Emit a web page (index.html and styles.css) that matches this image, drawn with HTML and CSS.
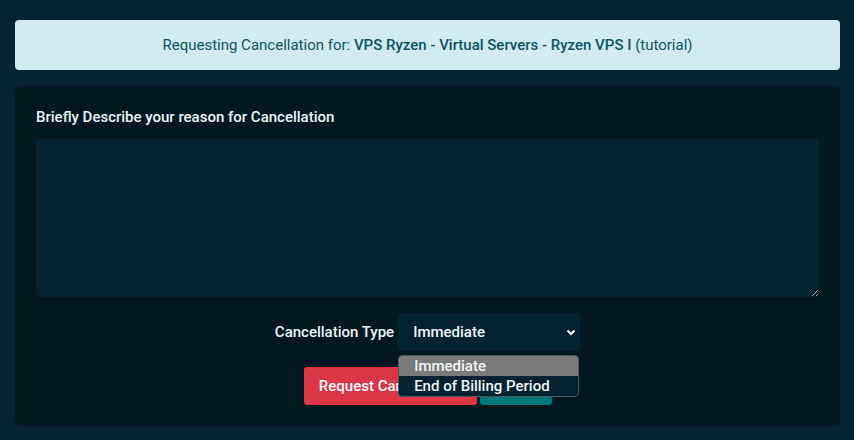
FILE: index.html
```html
<!DOCTYPE html>
<html lang="en">
<head>
<meta charset="utf-8">
<title>Request Cancellation</title>
<link rel="stylesheet" href="styles.css">
</head>
<body>
<div class="alert">Requesting Cancellation for: <strong>VPS Ryzen - Virtual Servers - Ryzen VPS I</strong> (tutorial)</div>
<form class="card">
  <label class="label" for="reason">Briefly Describe your reason for Cancellation</label>
  <textarea id="reason" class="reason"></textarea>
  <div class="type-row">
    <label class="type-label" for="type">Cancellation Type</label>
    <div class="select-wrap">
      <select id="type" class="select">
        <option>Immediate</option>
        <option>End of Billing Period</option>
      </select>
      <ul class="dropdown">
        <li class="opt opt-active">Immediate</li>
        <li class="opt">End of Billing Period</li>
      </ul>
    </div>
  </div>
  <div class="actions">
    <button type="button" class="btn btn-danger">Request Cancellation</button>
    <button type="button" class="btn btn-teal">Cancel</button>
  </div>
</form>
</body>
</html>
```
FILE: styles.css
```css
html, body {
  margin: 0;
  background: #022330;
}
body {
  padding: 20px 14px 14px 15px;
  font-family: Roboto, "Noto Sans", sans-serif;
  font-size: 15px;
}
.alert {
  background: #d1ecf1;
  color: #0c5460;
  border-radius: 4px;
  height: 50px;
  display: flex;
  align-items: center;
  justify-content: center;
  white-space: pre;
  margin-bottom: 16px;
}
.alert strong {
  font-weight: 500;
}
.card {
  background: #011820;
  border-radius: 5px;
  padding: 21px;
  display: flex;
  flex-direction: column;
}
.label {
  color: #eef4f6;
  font-weight: 500;
  line-height: 21px;
  margin-bottom: 11px;
}
.reason {
  height: 158px;
  box-sizing: border-box;
  background: #012230;
  border: none;
  border-radius: 4px;
  resize: vertical;
  color: #fff;
  margin: 0 0 16px;
  outline: none;
}
.type-row {
  display: flex;
  justify-content: center;
  align-items: center;
  gap: 3px;
  margin-bottom: 16px;
}
.type-label {
  color: #eef4f6;
  font-size: 15px;
  font-weight: 500;
}
.select-wrap {
  position: relative;
}
.select {
  appearance: none;
  -webkit-appearance: none;
  width: 183px;
  height: 38px;
  border: none;
  border-radius: 4px;
  background-color: #012230;
  background-image: url("data:image/svg+xml,%3Csvg xmlns='http://www.w3.org/2000/svg' width='10' height='8' viewBox='0 0 10 8'%3E%3Cpath d='M1.5 2.5 L5 6 L8.5 2.5' fill='none' stroke='%23ffffff' stroke-width='2'/%3E%3C/svg%3E");
  background-repeat: no-repeat;
  background-position: right 4px center;
  color: #f2f6f7;
  font-family: Roboto, "Noto Sans", sans-serif;
  font-size: 15px;
  font-weight: 500;
  padding: 0 16px;
  outline: none;
}
.dropdown {
  position: absolute;
  top: 42px;
  left: 1px;
  width: 181px;
  margin: 0;
  padding: 0;
  list-style: none;
  background: #012230;
  border: 1px solid #4b5559;
  border-radius: 4px;
  overflow: hidden;
  box-sizing: border-box;
  z-index: 2;
}
.opt {
  height: 20px;
  line-height: 20px;
  padding-left: 15px;
  color: #f2f6f7;
  font-size: 15px;
  font-weight: 500;
}
.opt-active {
  background: #7a7a7a;
}
.actions {
  display: flex;
  justify-content: center;
  gap: 3px;
}
.btn {
  height: 38px;
  border: none;
  border-radius: 3px;
  color: #fff;
  font-family: Roboto, "Noto Sans", sans-serif;
  font-size: 15px;
  font-weight: 500;
  padding: 0 14px;
}
.btn-danger {
  background: #dc3545;
  width: 173px;
}
.btn-teal {
  background: #017a7c;
  width: 72px;
}
```
